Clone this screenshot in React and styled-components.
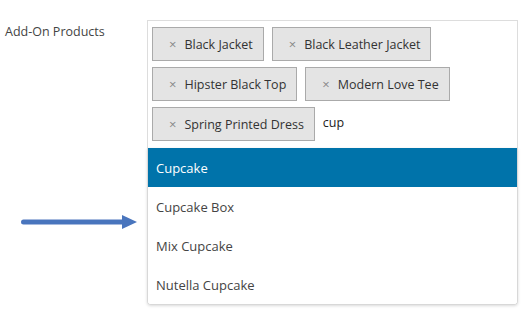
import React from "react";
import styled, { createGlobalStyle } from "styled-components";

const GlobalStyle = createGlobalStyle`
  body {
    margin: 0;
    background: #fff;
    font-family: "Open Sans", "Noto Sans", sans-serif;
  }
`;

const selected = [
  "Black Jacket",
  "Black Leather Jacket",
  "Hipster Black Top",
  "Modern Love Tee",
  "Spring Printed Dress",
];

const results = ["Cupcake", "Cupcake Box", "Mix Cupcake", "Nutella Cupcake"];

const App = () => {
  return (
    <>
      <GlobalStyle />
      <Page>
        <LabelColumn>
          <Label>Add-On Products</Label>
          <Arrow width="120" height="18" viewBox="0 0 120 18">
            <defs>
              <filter id="soft" x="-10%" y="-50%" width="120%" height="200%">
                <feGaussianBlur stdDeviation="0.6" />
              </filter>
            </defs>
            <g filter="url(#soft)" fill="#4a74bd">
              <rect x="2" y="6.5" width="104" height="5" rx="2.5" />
              <path d="M103 2 L118 9 L103 16 Z" />
            </g>
          </Arrow>
        </LabelColumn>
        <Select>
          <Selection>
            {selected.map((name) => (
              <Tag key={name}>
                <Remove>×</Remove>
                {name}
              </Tag>
            ))}
            <Search>cup</Search>
          </Selection>
          <Dropdown>
            {results.map((name, i) => (
              <Option key={name} $active={i === 0}>
                {name}
              </Option>
            ))}
          </Dropdown>
        </Select>
      </Page>
    </>
  );
};

const Page = styled.div`
  display: flex;
  padding-top: 20px;
  width: 525px;
  height: 296px;
`;

const LabelColumn = styled.div`
  width: 147px;
  flex-shrink: 0;
  display: flex;
  flex-direction: column;
`;

const Label = styled.div`
  padding: 3px 0 0 5px;
  font-size: 12.5px;
  line-height: 18px;
  color: #444;
`;

const Arrow = styled.svg`
  display: block;
  margin: 172px 0 0 19px;
`;

const Select = styled.div`
  width: 371px;
  display: flex;
  flex-direction: column;
`;

const Selection = styled.div`
  display: flex;
  flex-wrap: wrap;
  align-items: center;
  gap: 6px 8px;
  padding: 6px 4px 7px;
  border: 1px solid #ddd;
  border-bottom: none;
`;

const Tag = styled.div`
  display: flex;
  align-items: center;
  height: 34px;
  box-sizing: border-box;
  padding: 0 10px 0 16px;
  background: #e4e4e4;
  border: 1px solid #aaa;
  font-size: 12.5px;
  color: #333;
`;

const Remove = styled.span`
  color: #888;
  font-size: 13px;
  margin-right: 8px;
`;

const Search = styled.div`
  font-size: 12.5px;
  color: #222;
  padding-bottom: 4px;
`;

const Dropdown = styled.div`
  border: 1px solid #d8d8d8;
  border-top: none;
  border-radius: 0 0 4px 4px;
  box-shadow: 0 1px 3px rgba(0, 0, 0, 0.15);
  overflow: hidden;
`;

const Option = styled.div`
  height: 39px;
  display: flex;
  align-items: center;
  padding-left: 8px;
  font-size: 13px;
  background: ${(p) => (p.$active ? "#0073aa" : "#fff")};
  color: ${(p) => (p.$active ? "#fff" : "#444")};
`;

export default App;
